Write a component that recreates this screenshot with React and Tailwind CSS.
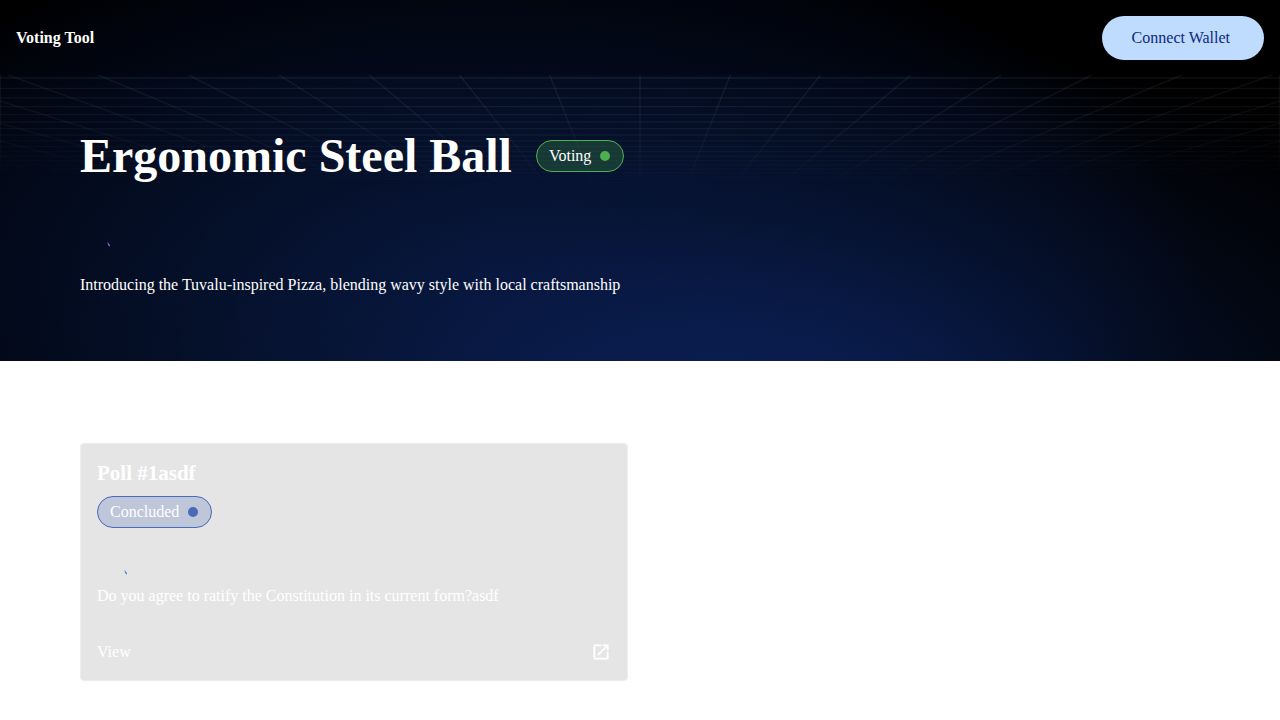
const VANISH_Y = 227;
const columns = Array.from({ length: 41 }, (_, i) => ((i - 20) * 903) / 10);
const rows = Array.from({ length: 24 }, (_, i) => VANISH_Y - 1 / (0.004464 + i * 0.000218));

function PerspectiveGrid() {
  return (
    <svg
      aria-hidden="true"
      className="absolute inset-x-0 top-0 h-[116px] w-full"
      viewBox="0 0 1280 116"
      preserveAspectRatio="xMidYMin slice"
    >
      <defs>
        <radialGradient id="fade" gradientUnits="userSpaceOnUse" cx="0" cy="0" r="1" gradientTransform="translate(640 0) scale(1400 114)">
          <stop offset="0" stopColor="#fff" stopOpacity="1" />
          <stop offset="0.3" stopColor="#fff" stopOpacity="0.85" />
          <stop offset="0.65" stopColor="#fff" stopOpacity="0.5" />
          <stop offset="1" stopColor="#fff" stopOpacity="0" />
        </radialGradient>
        <mask id="grid-fade" maskUnits="userSpaceOnUse" x="0" y="0" width="1280" height="116">
          <rect width="1280" height="116" fill="url(#fade)" />
        </mask>
      </defs>
      <g mask="url(#grid-fade)" stroke="#8c96a0" strokeOpacity="0.13" strokeWidth="1.4">
        <path d="M0.5 0V116M1279.5 0V116" />
        {columns.map((x) => (
          <line key={x} x1={640 + x} y1="0" x2="640" y2={VANISH_Y} />
        ))}
        {rows.map((y) => (
          <line key={y} x1="0" y1={y} x2="1280" y2={y} />
        ))}
      </g>
    </svg>
  );
}

function Flourish({ className }) {
  return (
    <svg aria-hidden="true" className={className} width="4" height="5" viewBox="0 0 4 5">
      <path d="M0.3 0.5H1.2L1.8 1.7L3 3V4.300H2L1.200 3Z" fill="#5c7ccc" />
    </svg>
  );
}

function StatusChip({ label, tone }) {
  const tones = {
    green: { chip: "border-[#4caf50] bg-[#4caf50]/25", dot: "bg-[#4caf50]" },
    blue: { chip: "border-[#4a6ab8] bg-[#4a6ab8]/25", dot: "bg-[#4a6ab8]" },
  };
  return (
    <span className={`inline-flex h-8 items-center gap-[9px] rounded-full border px-3 ${tones[tone].chip}`}>
      <span>{label}</span>
      <span className={`mr-px size-[10px] rounded-full ${tones[tone].dot}`} />
    </span>
  );
}

export default function App() {
  return (
    <div className="min-h-screen bg-white font-['Liberation_Serif',serif] text-base text-white">
      <div className="bg-black bg-[radial-gradient(ellipse_64%_108%_at_58%_115%,rgba(12,34,92,0.9)_0%,rgba(10,30,82,0.78)_25%,rgba(8,24,64,0.52)_50%,rgba(6,18,46,0.35)_72%,rgba(4,12,36,0.14)_90%,transparent_100%),radial-gradient(ellipse_56%_100%_at_38%_76%,#07153a_0%,#05102a_35%,#030b1e_60%,#020612_82%,transparent_100%)]">
        <header className="flex items-center justify-between bg-black/20 px-4 pt-4 pb-[15px]">
          <a href="#" className="font-bold">Voting Tool</a>
          <button type="button" className="h-11 rounded-full bg-[#bfdbfe] pr-[34px] pl-[30px] text-[#0d2a80]">
            Connect Wallet
          </button>
        </header>
        <section className="relative px-20 pt-[53px] pb-[64px]">
          <PerspectiveGrid />
          <div className="relative flex items-center gap-6">
            <h1 className="text-[48px] leading-14 font-bold">Ergonomic Steel Ball</h1>
            <StatusChip label="Voting" tone="green" />
          </div>
          <Flourish className="relative mt-[58px] ml-[27px]" />
          <p className="relative mt-[26px] leading-6">
            Introducing the Tuvalu-inspired Pizza, blending wavy style with local craftsmanship
          </p>
        </section>
      </div>

      <main className="grid grid-cols-2 gap-6 px-20 pt-[82px] pb-10">
        <article className="rounded-sm border border-[#ededed] bg-[#e5e5e5] p-4">
          <h2 className="text-[21px] leading-[26px] font-bold">Poll #1asdf</h2>
          <div className="mt-[10px] flex">
            <StatusChip label="Concluded" tone="blue" />
          </div>
          <Flourish className="mt-[42px] ml-[27px]" />
          <p className="mt-[9px] leading-6">Do you agree to ratify the Constitution in its current form?asdf</p>
          <a href="#" className="mt-8 flex items-center justify-between leading-6">
            <span>View</span>
            <svg aria-hidden="true" className="size-5" viewBox="0 0 24 24" fill="currentColor">
              <path d="M19 19H5V5h7V3H5c-1.110 0-2 .9-2 2v14c0 1.100.890 2 2 2h14c1.100 0 2-.9 2-2v-7h-2v7zM14 3v2h3.590l-9.830 9.830 1.410 1.410L19 6.410V10h2V3h-7z" stroke="currentColor" strokeWidth="0.3" />
            </svg>
          </a>
        </article>
      </main>
    </div>
  );
}
